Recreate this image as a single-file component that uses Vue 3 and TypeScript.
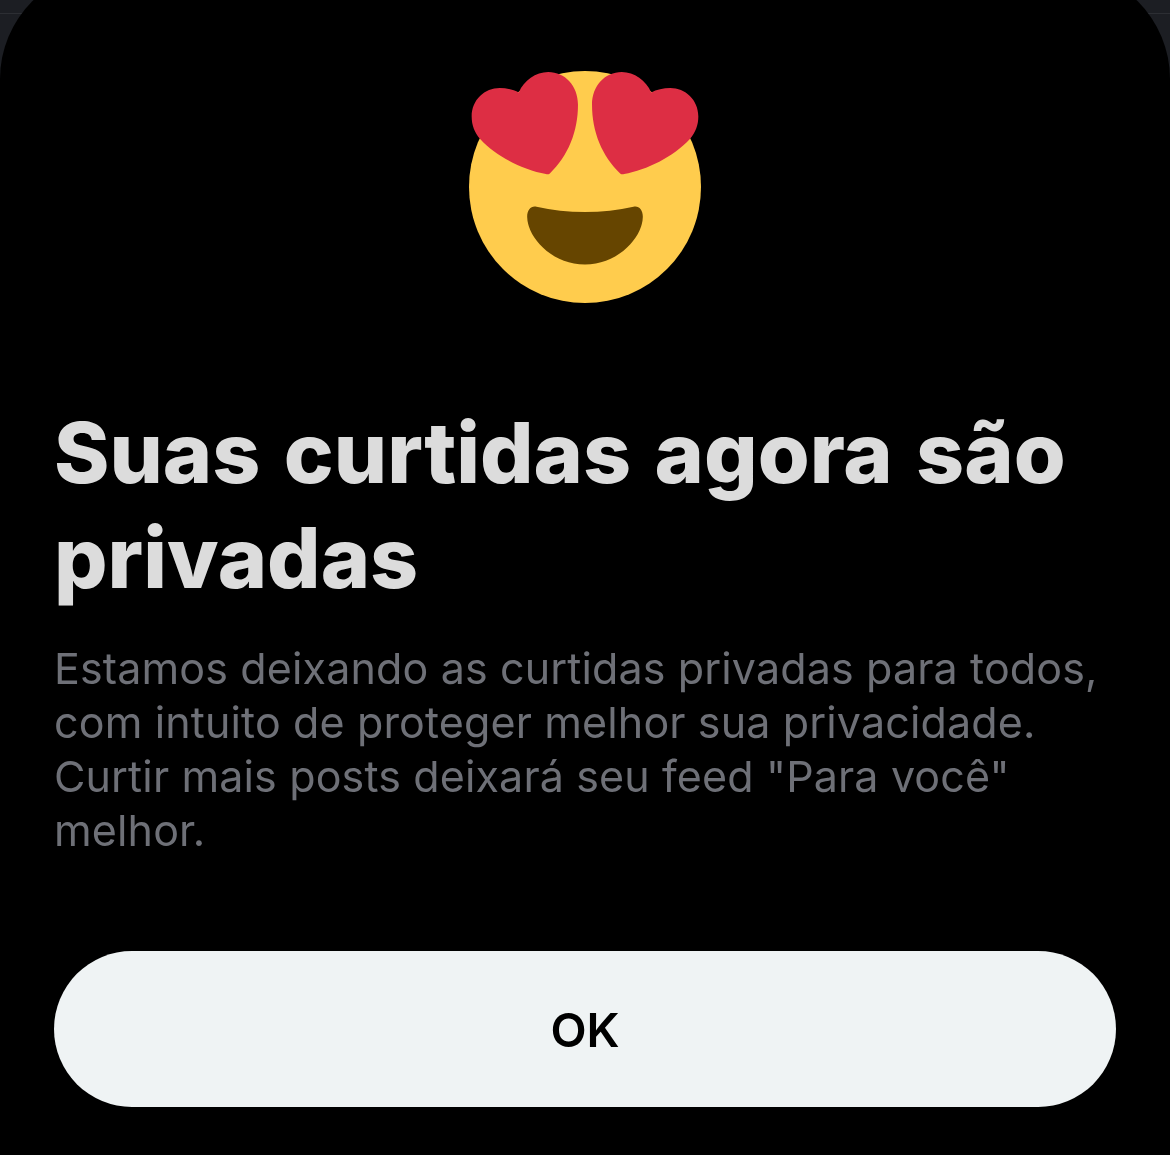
<template>
  <div class="backdrop">
    <div class="backdrop-line"></div>
    <section class="sheet">
      <svg class="emoji" viewBox="88 64 694 694" xmlns="http://www.w3.org/2000/svg">
        <circle cx="435" cy="411" r="347" fill="#ffcc4d" />
        <path
          fill="#664500"
          d="M435 486C385 486 335 480 290 470C275 466 262 478 262 500C262 560 335 643 435 643C535 643 608 560 608 500C608 478 595 466 580 470C535 480 485 486 435 486Z"
        />
        <path fill="#dd2e44" :d="heart" />
        <path fill="#dd2e44" :d="heart" transform="matrix(-1 0 0 1 870 0)" />
      </svg>

      <h1 class="title">Suas curtidas agora são privadas</h1>
      <p class="body">
        Estamos deixando as curtidas privadas para todos, com intuito de proteger melhor sua
        privacidade. Curtir mais posts deixará seu feed "Para você" melhor.
      </p>

      <button class="ok" type="button">OK</button>
    </section>
  </div>
</template>

<script setup lang="ts">
// left eye; the right one is the same path flipped around the face's centre
const heart =
  'M237 128C252 92 288 67 325 67C375 67 414 108 414 165C414 245 385 318 329 371C326 373 322 373 318 372C250 360 170 320 122 268C104 248 96 225 96 200C96 150 135 115 180 115C200 115 222 120 237 128Z'
</script>

<style>
html,
body {
  margin: 0;
  background: #000;
}
</style>

<style scoped>
.backdrop {
  position: relative;
  width: 1170px;
  height: 1155px;
  overflow: hidden;
  background: #1c1e23;
  font-family: Inter, 'Liberation Sans', sans-serif;
}

.backdrop-line {
  position: absolute;
  top: 13px;
  left: 0;
  right: 0;
  height: 1px;
  background: #2c2e33;
}

.sheet {
  position: relative;
  box-sizing: border-box;
  height: 1186px;
  margin-top: -31px;
  padding: 102px 54px 0;
  display: flex;
  flex-direction: column;
  background: #000;
  border-radius: 110px 110px 0 0;
  will-change: transform;
}

.emoji {
  flex: none;
  align-self: center;
  width: 232px;
  height: 232px;
}

.title {
  margin: 97px 0 0;
  font-size: 84px;
  font-weight: 800;
  word-spacing: 5px;
  line-height: 105px;
  color: #dcdcdc;
}

.body {
  margin: 31px 0 0;
  font-size: 43px;
  font-weight: 400;
  letter-spacing: 0.14px;
  line-height: 54px;
  color: #6e7077;
}

.ok {
  margin-top: 94px;
  flex: none;
  height: 156px;
  border: 0;
  border-radius: 78px;
  background: #eff3f4;
  color: #000;
  font-family: inherit;
  font-size: 47px;
  font-weight: 575;
}
</style>
